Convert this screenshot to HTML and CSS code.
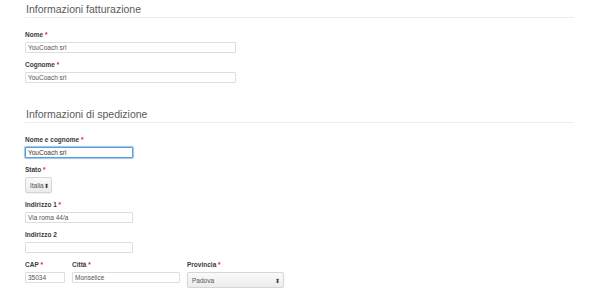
FILE: index.html
```html
<!DOCTYPE html>
<html lang="it">
<head>
    <meta charset="UTF-8">
    <meta name="viewport" content="width=device-width, initial-scale=1.0">
    <title>Checkout - Informazioni</title>
    <link rel="stylesheet" href="styles.css">
</head>
<body>
    <form class="checkout">
        <h2 class="section-title">Informazioni fatturazione</h2>

        <div class="field">
            <label>Nome <span class="req">*</span></label>
            <input class="input input-wide" type="text" value="YouCoach srl">
        </div>
        <div class="field">
            <label>Cognome <span class="req">*</span></label>
            <input class="input input-wide" type="text" value="YouCoach srl">
        </div>

        <h2 class="section-title second">Informazioni di spedizione</h2>

        <div class="field">
            <label>Nome e cognome <span class="req">*</span></label>
            <input class="input input-mid focused" type="text" value="YouCoach srl">
        </div>
        <div class="field">
            <label>Stato <span class="req">*</span></label>
            <div class="select select-small">Italia <span class="arrows">&#x2B0D;</span></div>
        </div>
        <div class="field">
            <label>Indirizzo 1 <span class="req">*</span></label>
            <input class="input input-mid" type="text" value="Via roma 44/a">
        </div>
        <div class="field">
            <label>Indirizzo 2</label>
            <input class="input input-mid" type="text" value="">
        </div>

        <div class="row">
            <div class="field">
                <label>CAP <span class="req">*</span></label>
                <input class="input input-cap" type="text" value="35034">
            </div>
            <div class="field">
                <label>Città <span class="req">*</span></label>
                <input class="input input-mid" type="text" value="Monselice">
            </div>
            <div class="field">
                <label>Provincia <span class="req">*</span></label>
                <div class="select select-prov">Padova <span class="arrows">&#x2B0D;</span></div>
            </div>
        </div>
    </form>
</body>
</html>
```

FILE: styles.css
```css
body {
    margin: 0;
    background-color: #fff;
    font-family: "Liberation Sans", Arial, sans-serif;
    color: #333;
}
.checkout {
    padding-left: 25px;
    width: 549px;
}
.section-title {
    margin: 0;
    padding: 3px 0 2px 1px;
    font-size: 10.5px;
    line-height: 12px;
    font-weight: normal;
    color: #5a5a5a;
    border-bottom: 1px solid #ececec;
}
.section-title.second {
    margin-top: 22px;
}
.field {
    margin-top: 7px;
}
.section-title + .field {
    margin-top: 12px;
}
.field label {
    display: block;
    height: 9px;
    margin-bottom: 3px;
    font-size: 6.5px;
    line-height: 9px;
    font-weight: bold;
    color: #3a3a3a;
}
.req {
    color: #e02020;
}
.input {
    display: block;
    box-sizing: border-box;
    height: 11px;
    margin: 0;
    padding: 0 2px;
    font-family: "Liberation Sans", Arial, sans-serif;
    font-size: 6.5px;
    color: #555;
    background-color: #fff;
    border: 1px solid #ddd;
    border-radius: 1px;
    outline: none;
}
.input-wide {
    width: 211px;
}
.input-mid {
    width: 108px;
}
.input-cap {
    width: 40px;
}
.input.focused {
    border-color: #5b9dd9;
    box-shadow: 0 0 1px 1px #9cc3ea;
    color: #333;
}
.select {
    box-sizing: border-box;
    display: flex;
    align-items: center;
    justify-content: space-between;
    height: 16px;
    padding: 0 3px 0 4px;
    font-size: 6.5px;
    color: #555;
    background: linear-gradient(#fafafa, #ececec);
    border: 1px solid #d6d6d6;
    border-radius: 2px;
    box-shadow: 0 1px 1px rgba(0, 0, 0, 0.06);
}
.select-small {
    width: 27px;
}
.select-prov {
    width: 97px;
    margin-top: 1px;
}
.arrows {
    font-size: 6px;
    color: #333;
}
.row {
    display: flex;
    gap: 7px;
}
```
